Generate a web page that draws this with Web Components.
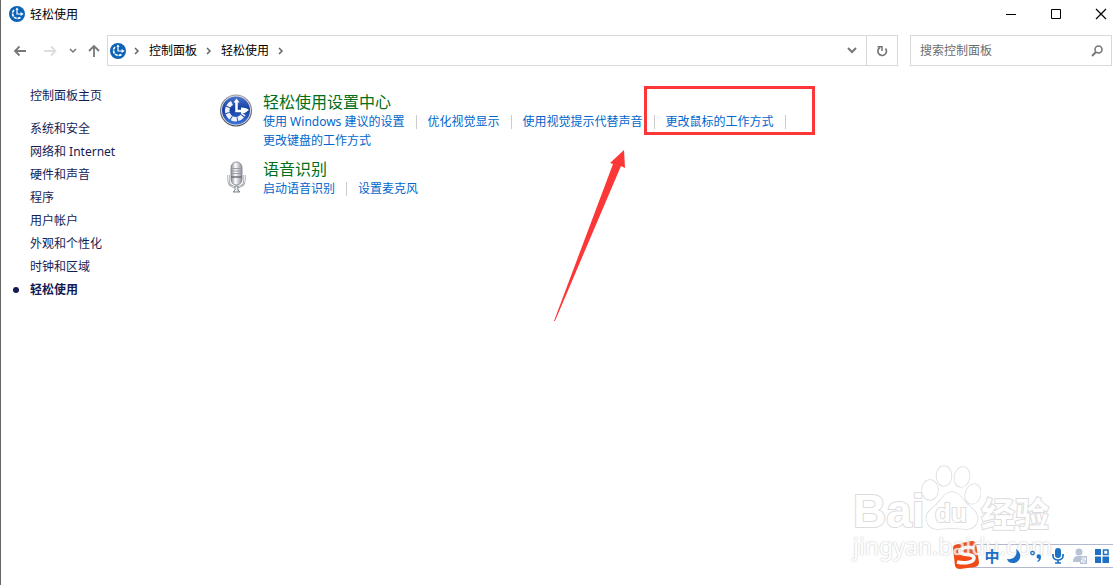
<!DOCTYPE html>
<html lang="zh-CN">
<head>
<meta charset="utf-8">
<title>轻松使用</title>
<style>
html,body{margin:0;height:100%;background:#fff}
body{font:12px/19px "Noto Sans","Noto Sans CJK SC",sans-serif;color:#000}
</style>
</head>
<body>
<ease-window></ease-window>
<script>
const RESET = `*{box-sizing:border-box}button{appearance:none;border:0;background:none;padding:0;margin:0;font:inherit;color:inherit;display:flex;align-items:center;justify-content:center}svg{display:block;flex:none}a{color:inherit;text-decoration:none}`;
function define(name, css, html) {
  const t = document.createElement('template');
  t.innerHTML = `<style>${RESET}${css}</style>${html}`;
  customElements.define(name, class extends HTMLElement {
    constructor() {
      super();
      this.attachShadow({mode: 'open'}).append(t.content.cloneNode(true));
    }
    connectedCallback() {
      const a = this.shadowRoot.querySelector('a');
      if (a && this.hasAttribute('current')) a.setAttribute('aria-current', 'page');
    }
  });
}

define('ease-icon', `:host{display:block;width:16px;height:16px}svg{width:100%;height:100%}`, `
<svg viewBox="0 0 16 16"><circle cx="8" cy="8" r="8" fill="#0c63b5"/>
<path d="M5 4A4.800 4.800 0 1 0 12 11" fill="none" stroke="#fff" stroke-width="1.700" stroke-dasharray="3 .8"/>
<path d="M8 3v5h4" fill="none" stroke="#fff" stroke-width="1.200"/><path d="M6.300 3.800h3.400L8 1.600zM11.600 6 14.600 8l-3 2z" fill="#fff"/></svg>`);

define('ease-center-icon', `:host{display:block;width:34px;height:34px}`, `
<svg width="34" height="34" viewBox="0 0 34 34"><defs>
<linearGradient id="r" x1="0" y1="0" x2="0" y2="1"><stop offset="0" stop-color="#9a9ca3"/><stop offset=".5" stop-color="#686b75"/><stop offset="1" stop-color="#4a4d55"/></linearGradient>
<linearGradient id="b" x1="0" y1="0" x2="0" y2="1"><stop offset="0" stop-color="#4a73cf"/><stop offset=".45" stop-color="#143f9f"/><stop offset="1" stop-color="#3973dc"/></linearGradient></defs>
<circle cx="17" cy="17.500" r="16" fill="url(#r)"/><circle cx="17" cy="17.500" r="15" fill="#d9dbe2"/><circle cx="17" cy="17.500" r="14" fill="url(#b)"/>
<path d="M13 10A8.500 8.500 0 1 0 24.500 21" fill="none" stroke="#eef1f8" stroke-width="4.500" stroke-dasharray="5.200 1"/>
<path d="M17.500 9v9h7" fill="none" stroke="#fff" stroke-width="2.500"/><path d="M14.500 9.500h6l-3-4zM22 14.500q6 0 8 2.500-3 3-8 4z" fill="#fff"/></svg>`);

define('mic-icon', `:host{display:block;width:34px;height:34px}`, `
<svg width="34" height="34" viewBox="0 0 34 34"><defs><linearGradient id="m"><stop offset="0" stop-color="#85888f"/><stop offset=".4" stop-color="#fff"/><stop offset="1" stop-color="#8b8d98"/></linearGradient></defs>
<path d="M9.500 15v5c0 5 3 7 8 7s8-2 8-7v-5" fill="none" stroke="#888b94" stroke-width="2"/><path d="M9.500 15v5c0 5 3 7 8 7s8-2 8-7v-5" fill="none" stroke="#e8e9ec" stroke-width="1"/>
<path d="M16 26h3v4l2 2h-7l2-2z" fill="url(#m)" stroke="#858891" stroke-width="1"/>
<rect x="12" y="2" width="11" height="23" rx="5.500" fill="url(#m)" stroke="#8b8e97"/>
<path d="M13 8.500h9M13 11h9M13 13.500h9" stroke="#9a9da4" stroke-width="1"/><path d="M12 17h11" stroke="#6e7179" stroke-width="1.500"/></svg>`);

define('title-bar', `:host{display:flex;align-items:center;height:28px;padding-left:8px}h1{font:inherit;margin:0 auto 0 5px}
.controls{display:flex}button{width:45px;height:28px}button:last-child{margin-right:-11px}`, `
<ease-icon></ease-icon><h1><slot></slot></h1>
<div class="controls">
<button aria-label="最小化"><svg width="12" height="12"><path d="M1 6.500h10" stroke="#000"/></svg></button>
<button aria-label="最大化"><svg width="12" height="12"><path d="M1.500 1.500h9v9h-9z" fill="none" stroke="#000"/></svg></button>
<button aria-label="关闭"><svg width="12" height="12"><path d="M1 1l10 10M11 1 1 11" stroke="#000" stroke-width="1.200"/></svg></button></div>`);

define('crumb-item', `:host{display:flex;align-items:center}button{margin:0 9px}`, `
<button><slot></slot></button><svg width="6" height="8" viewBox="0 0 6 8"><path d="M1 1l3 3-3 3" fill="none" stroke="#666" stroke-width="1.500"/></svg>`);

define('nav-bar', `:host{display:flex;align-items:center;height:31px;margin-top:7px;color:#777}
.arrows{display:flex;width:106px;flex:none;padding-left:12px;align-items:center}.arrows button{height:31px}
.back,.next{width:14px}.next{margin-left:16px}.recent{width:8px;margin-left:12px}.up{width:12px;margin-left:11px}
.address{display:flex;flex:1;height:31px;border:1px solid #d9d9d9;align-items:center;padding-left:2px;color:#000}
.root{margin-right:8px}.drop{margin-left:auto;width:28px;height:29px}.refresh{width:31px;height:29px;border-left:1px solid #d9d9d9}
form{display:flex;width:202px;height:31px;border:1px solid #d9d9d9;margin-left:12px;align-items:center;padding:0 8px 0 9px}
input{flex:1;min-width:0;border:0;outline:0;padding:0;font:inherit;color:#000;background:none}input::placeholder{color:#6d6d6d;opacity:1}`, `
<nav class="arrows" aria-label="导航">
<button class="back" aria-label="后退"><svg width="14" height="12" viewBox="0 0 14 12"><path d="M13 6H2M6.500 1.500 2 6l4.500 4.500" fill="none" stroke="#777" stroke-width="1.800"/></svg></button>
<button class="next" aria-label="前进"><svg width="14" height="12" viewBox="0 0 14 12"><path d="M1 6h11M8 1.500 12.500 6 8 10.500" fill="none" stroke="#ddd" stroke-width="1.800"/></svg></button>
<button class="recent" aria-label="最近位置"><svg width="8" height="6"><path d="M1 1l3 3 3-3" fill="none" stroke="#777" stroke-width="1.500"/></svg></button>
<button class="up" aria-label="上移"><svg width="12" height="13"><path d="M6 13V2M1 7l5-5 5 5" fill="none" stroke="#777" stroke-width="1.800"/></svg></button></nav>
<div class="address"><ease-icon class="root"></ease-icon><svg width="6" height="8" viewBox="0 0 6 8"><path d="M1 1l3 3-3 3" fill="none" stroke="#666" stroke-width="1.500"/></svg>
<crumb-item>控制面板</crumb-item><crumb-item>轻松使用</crumb-item>
<button class="drop" aria-label="以前的位置"><svg width="10" height="7"><path d="M1 1l4 4 4-4" fill="none" stroke="#777" stroke-width="2"/></svg></button>
<button class="refresh" aria-label="刷新"><svg width="12" height="12" viewBox="0 0 12 12"><path d="M4 2.500A4.300 4.300 0 1 0 9.500 3.500" fill="none" stroke="#777" stroke-width="1.700"/><path d="M1.500 1.700H6V6" fill="none" stroke="#777" stroke-width="1.500"/></svg></button></div>
<form role="search"><input type="search" aria-label="搜索控制面板" placeholder="搜索控制面板"><button type="button" aria-label="搜索"><svg width="12" height="12" viewBox="0 0 12 12"><circle cx="7.500" cy="4.500" r="3.500" fill="none" stroke="#777" stroke-width="1.600"/><path d="M5 7 1 11" stroke="#777" stroke-width="2"/></svg></button></form>`);

define('side-link', `:host{display:flex;align-items:center;height:23px;color:#151c55}i{width:6px;height:6px;border-radius:3px;margin-right:11px}
:host([current]){font-weight:700}:host([current]) i{background:#151c55}`, `<i></i><a href="#"><slot></slot></a>`);

define('side-nav', `:host{display:block;width:218px;flex:none;padding:18px 0 0 12px}side-link:first-child{margin-bottom:10px}`, `<nav aria-label="控制面板">
<side-link>控制面板主页</side-link><side-link>系统和安全</side-link><side-link>网络和 Internet</side-link><side-link>硬件和声音</side-link><side-link>程序</side-link><side-link>用户帐户</side-link><side-link>外观和个性化</side-link><side-link>时钟和区域</side-link><side-link current>轻松使用</side-link></nav>`);

define('task-link', `:host{display:flex;align-items:center;color:#0066cc;height:19px;white-space:nowrap}
:host([divided])::after{content:"";width:1px;height:14px;background:#ccc;margin:0 11px}`, `<a href="#"><slot></slot></a>`);

define('task-group', `:host{display:flex;margin-bottom:10px}.icon{width:34px;margin-right:10px;flex:none}h2{font-size:16px;line-height:19px;font-weight:400;margin:0;color:#007018}
.links{display:flex;flex-wrap:wrap;max-width:560px}`, `
<div class="icon"><slot name="icon"></slot></div><div><h2><a href="#"><slot name="title"></slot></a></h2><div class="links"><slot></slot></div></div>`);

define('red-note', `:host{position:absolute;left:335px;top:-7px;width:261px;height:235px;pointer-events:none}`, `
<svg width="261" height="235" viewBox="0 0 261 235"><path d="M91.500 1.500h168v46h-168z" fill="none" stroke="#fb3737" stroke-width="3"/>
<path d="M0 235 59 78l-3-1 14-13 1 18-4-2L1 235z" fill="#fb3737"/></svg>`);

define('task-list', `:host{display:block;position:relative;flex:1;min-width:0;margin-top:27px}`, `
<task-group><ease-center-icon slot="icon"></ease-center-icon><span slot="title">轻松使用设置中心</span>
<task-link divided>使用 Windows 建议的设置</task-link><task-link divided>优化视觉显示</task-link><task-link divided>使用视觉提示代替声音</task-link><task-link divided>更改鼠标的工作方式</task-link><task-link>更改键盘的工作方式</task-link></task-group>
<task-group><mic-icon slot="icon"></mic-icon><span slot="title">语音识别</span><task-link divided>启动语音识别</task-link><task-link>设置麦克风</task-link></task-group>
<red-note></red-note>`);

define('ime-bar', `:host{position:absolute;right:0;bottom:17px;display:flex;align-items:center;width:148px;height:24px;border:solid #b4b8cc;border-width:1px 0;background:#fff;padding-left:16px;color:#1d70c5}
.logo{position:absolute;left:-14px;top:-5px}button{position:relative;z-index:2;width:22px;height:22px}.zh{font-weight:700;font-size:15px}`, `
<svg class="logo" width="30" height="30" viewBox="0 0 30 30"><path d="M6 4 21 1q3 0 4 3l3 18q0 4-4 5L9 29q-4 0-5-3L2 8q0-3 4-4z" fill="#f04b17"/><path d="M23 8C14 6 8 9 9 12c1 4 14 1 14 6 0 4-8 6-17 4" fill="none" stroke="#fff" stroke-width="3.500"/></svg>
<button class="zh" aria-label="中文">中</button>
<button aria-label="半角"><svg width="14" height="14" viewBox="0 0 14 14"><path d="M9 0c7 4 5 14-3 14-3 0-5-1-6-4 7 1 11-4 9-10z" fill="#1d70c5"/></svg></button>
<button aria-label="标点"><svg width="14" height="14" viewBox="0 0 14 14"><circle cx="3.500" cy="4" r="1.700" fill="none" stroke="#1d70c5" stroke-width="1.300"/><path d="M7.500 7.500a2 2 0 1 1 4.500 0c0 3-1 5-3.500 5.500v-1.200q1.300-.5 1.500-2-2.500 0-2.500-2.300z" fill="#1d70c5"/></svg></button>
<button aria-label="语音"><svg width="14" height="16" viewBox="0 0 14 16"><rect x="4" width="6" height="10" rx="3" fill="#1d70c5"/><path d="M2 6v2a5 4 0 0 0 10 0V6M7 12v3M4 15h6" fill="none" stroke="#1d70c5" stroke-width="1.700"/></svg></button>
<button aria-label="账户"><svg width="14" height="16" viewBox="0 0 14 16"><circle cx="6" cy="4" r="3.500" fill="#b8c2d5"/><path d="M0 14c0-5 2-6 6-6h3v6z" fill="#b8c2d5"/><path d="M7 8h7v8H7z" fill="#b8c2d5"/><path d="M8.500 10h4v2h-4v2h4" fill="none" stroke="#fff"/></svg></button>
<button aria-label="工具箱"><svg width="14" height="14" viewBox="0 0 14 14"><path d="M0 0h6v6H0zM0 7.500h6V14H0zM7.500 7.500H14V14H7.500z" fill="#1d70c5"/><path d="M8.500 1h4.500v4.500H8.500z" fill="none" stroke="#1d70c5" stroke-width="1.500"/></svg></button>`);

define('baidu-mark', `:host{position:absolute;z-index:1;right:60px;bottom:24px;width:200px;pointer-events:none;color:#fff}
.top{display:flex;height:66px;align-items:flex-end;paint-order:stroke;-webkit-text-stroke:2px #dcdcdc}.bai{font:700 46px/40px "Liberation Sans",sans-serif;width:68px}
.paw{position:relative;width:60px;height:66px}.paw span{position:absolute;left:14px;top:33px;font:700 26px/30px "Liberation Sans",sans-serif}
.jy{font:700 34px/36px "Noto Sans CJK SC",sans-serif}
.url{font-size:23px;line-height:30px;white-space:nowrap;opacity:.75;text-shadow:0 0 2px #b8b8b8,0 0 1px #c8c8c8}`, `
<div class="top"><span class="bai">Bai</span><div class="paw"><svg width="60" height="66" viewBox="0 0 60 66"><g fill="#fff" stroke="#dcdcdc" stroke-width="1.500"><ellipse cx="9" cy="25" rx="8" ry="10"/><ellipse cx="23" cy="11" rx="7.500" ry="10"/><ellipse cx="41" cy="12" rx="7.500" ry="10" transform="rotate(12 41 12)"/><ellipse cx="52" cy="29" rx="7.500" ry="10" transform="rotate(15 52 29)"/><path d="M31 27c-8 0-11 9-17 14-7 5-11 11-7 18 5 8 15 4 24 4s19 4 24-4c4-7 0-13-7-18-6-5-9-14-17-14z"/></g></svg><span>du</span></div><span class="jy">经验</span></div>
<div class="url">jingyan.baidu.com</div>`);

define('ease-window', `:host{display:block;position:relative;min-height:100vh;border-left:1px solid #666;padding-right:1px;overflow:hidden}main{display:flex}`, `
<title-bar>轻松使用</title-bar><nav-bar></nav-bar><main><side-nav></side-nav><task-list></task-list></main><ime-bar></ime-bar><baidu-mark></baidu-mark>`);
</script>
</body>
</html>
